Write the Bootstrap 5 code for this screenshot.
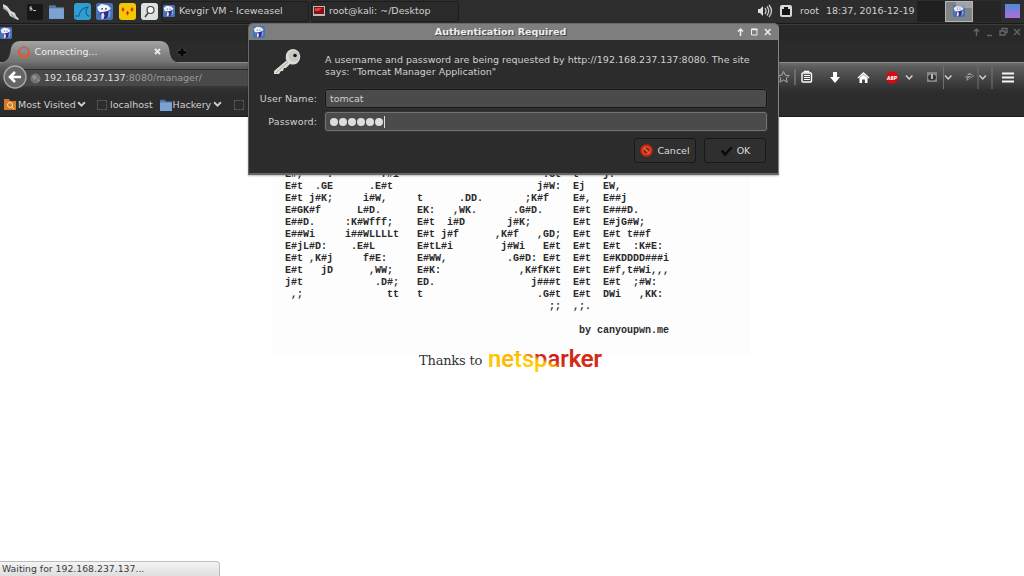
<!DOCTYPE html>
<html lang="en">
<head>
<meta charset="utf-8">
<title>Kevgir VM - Iceweasel</title>
<link href="https://cdn.jsdelivr.net/npm/bootstrap@5.3.0/dist/css/bootstrap.min.css" rel="stylesheet">
<style>
body{font:9.5px/14px "DejaVu Sans",sans-serif;color:#d0d0d0;background:#fff;width:1024px;height:576px;overflow:hidden}
svg{display:block;flex:none}
span{white-space:nowrap}
.panel{height:24px;background:#2d2d2d;border-bottom:1px solid #1a1a1a}
.launch{padding-left:2px;width:161px}
.launch svg{margin-right:5.5px}
.task{height:21px;margin-top:-1px;width:148px;border:1px solid #1d1d1d;border-radius:3px;background:#2a2a2a;padding-left:1px}
.titlebar{height:17px;background:#282828;border-top:1px solid #3b3b3b}
.tabs{height:21px;background:#2b2b2b}
.toolbar{height:31px;background:linear-gradient(#6c6c6c,#5a5a5a 15%,#303030 90%,#2d2d2d);border-top:1px solid #8b8b8b}
.urlbox{height:17px;width:260px;margin-left:-5px;margin-top:-1px;background:#494949;border-top:1px solid #292929;padding-left:11px;color:#9b9b9b}
.urlbox b{font-weight:400;color:#dedede}
.bookmarks{height:24px;background:#2c2c2c;border-bottom:1px solid #1b1b1b;padding-left:4px}
.dash{width:10px;height:10px;flex:none;border:1px dashed #555}
.dlg{left:248px;top:23px;width:531px;height:152px;background:#2c2c2c;border:1px solid #696969;border-right:1px solid #858585;border-bottom:2px solid #666;border-radius:5px 5px 0 0;box-shadow:0 1px 2px #0004}
.dlghead{height:16px;background:#7c7e80;border-radius:4px 4px 0 0;color:#eee;font-weight:700;text-shadow:1px 1px 0 #444}
.field{height:19px;width:442px;background:#4b4b4b;border:1px solid #171717;border-radius:2px;padding-left:4px;outline:1px solid #333}
.field.on{border:1px solid #727272}
.flabel{width:68px;text-align:right;margin-right:8px;letter-spacing:.13px;white-space:nowrap}
.dbtn{height:25px;width:62px;border:1px solid #181818;border-radius:3px;background:#2f2f2f;color:#ddd;gap:4px}
.ascii{font:bold 10px/12px "Liberation Mono",monospace;color:#2a2a2a;margin:0;padding:52px 0 0 285px;height:238px;width:750px;overflow:visible;background:linear-gradient(90deg,transparent 272px,#fdfdfd 272px)}
.thanks{font:13px/20px "DejaVu Serif",serif;color:#333;letter-spacing:-.2px}
.status{left:0;bottom:0;height:15px;width:220px;background:linear-gradient(#f4f4f4,#dedede);border:1px solid #bcbcbc;border-left:0;border-bottom:0;border-radius:0 4px 0 0;color:#3b3b3b;font-size:9.3px;padding-left:2px}
.space{width:28px;height:21px;background:#202020}
</style>
</head>
<body class="position-relative d-flex flex-column">
<svg width="0" height="0" class="position-absolute"><defs>
<symbol id="weasel" viewBox="0 0 16 16"><rect width="16" height="16" rx="2" fill="#4673b6"/><path d="M1 4l4-3 6 1 3 3-2 2-3 2-5 0-2-2z" fill="#f1f3fa"/><path d="M4 9l5-1 3-1 1 4-4 4H5z" fill="#38288b"/><path d="M5 10l2-1 1 3-1 3H5z" fill="#dde2f5"/><path d="M12 7l2 2-1 4-2 1z" fill="#79a7df"/><path d="M5 5.500h1.500M8.500 5.500H10" stroke="#223" stroke-width="1"/></symbol>
<symbol id="folder" viewBox="0 0 16 14"><path d="M1 1h6l1 2h7v11H1z" fill="#56779f"/><path d="M1 4h14v10H1z" fill="#7ba2d2"/></symbol>
<symbol id="chev" viewBox="0 0 8 6"><path d="M1 1l3 3 3-3" fill="none" stroke="currentColor" stroke-width="1.6"/></symbol>
</defs></svg>

<header class="panel d-flex align-items-center flex-shrink-0">
 <div class="launch d-flex align-items-center flex-shrink-0">
  <svg width="18" height="18" viewBox="0 0 18 18"><path d="M1 1l4 2 4 5 4 2 1 3 3 3-1 1-4-2-4-2-2-4-3-3-2-2z" fill="#d4d8da"/><path d="M1 5l5 3M9 11l4 4" stroke="#9aa2a7" stroke-width="1.300"/></svg>
  <svg width="16" height="16" viewBox="0 0 16 16" style="margin-left:1px"><rect width="16" height="16" rx="2" fill="#171717"/><path d="M5 3H3v1.500h2V6H2.500M6 6.500h3" stroke="#ddd" fill="none" stroke-width=".9"/></svg>
  <svg width="17" height="15"><use href="#folder"/></svg>
  <svg width="17" height="17" viewBox="0 0 17 17" style="margin-left:3px"><rect width="17" height="17" rx="3" fill="#319ed1"/><path d="M1 13h4q1-8 9-9-4 5 0 9h2" fill="none" stroke="#135d8c" stroke-width="1.100"/></svg>
  <svg width="17" height="17"><use href="#weasel"/></svg>
  <svg width="17" height="17" viewBox="0 0 17 17"><rect width="17" height="17" rx="3" fill="#f3c800"/><path d="M4 4l1.500 2.500L4 9 2.500 6.500zM8.500 7.500l1.500 2.500-1.500 2.500L7 10zM13 4l1.500 2.500L13 9l-1.500-2.500z" fill="#d22b15"/></svg>
  <svg width="17" height="17" viewBox="0 0 17 17"><rect width="17" height="17" rx="3" fill="#dce2dd"/><circle cx="9.500" cy="7" r="3.500" fill="#f6f6f6" stroke="#3e4342" stroke-width="1.200"/><path d="M7 10l-3 4" stroke="#3e4342" stroke-width="1.500"/></svg>
 </div>
 <div class="task d-flex align-items-center"><svg width="12" height="12"><use href="#weasel"/></svg><span class="ms-1">Kevgir VM - Iceweasel</span></div>
 <div class="task d-flex align-items-center" style="margin-left:2px"><svg width="12" height="10" viewBox="0 0 12 10"><rect width="12" height="10" fill="#bbb"/><rect x="1" y="1" width="10" height="7" fill="#8e0d10"/><path d="M2 2h7L6 5H2z" fill="#dc4141"/></svg><span class="ms-1">root@kali: ~/Desktop</span></div>
 <div class="ms-auto d-flex align-items-center" style="margin-top:-1px">
  <svg width="16" height="14" viewBox="0 0 16 14"><path d="M1 5h2l3-3v10L3 9H1z" fill="#ddd"/><path d="M8 4q2 3 0 6M10 2.500q3.500 4.500 0 9M12 1q5 6 0 12" fill="none" stroke="#ccc" stroke-width="1.300"/></svg>
  <svg width="12" height="12" viewBox="0 0 12 12" style="margin:0 8px 0 7px"><rect width="12" height="12" rx="2" fill="#d8d8d8"/><path d="M2 4h2V2h4v2h2v6H2z" fill="#151515"/></svg>
  <span style="width:26px">root</span><span style="width:91px">18:37, 2016-12-19</span>
  <div class="space"></div>
  <div class="position-relative d-flex justify-content-center align-items-center" style="width:28px;height:21px;background:#818487;border:1px solid #b5b5b5"><svg width="12" height="12"><use href="#weasel"/></svg><i class="position-absolute top-0 end-0" style="width:16px;height:6px;background:#bcc0c488"></i></div>
  <div class="space" style="background:#252525"></div>
  <div style="width:15px;height:14px;margin:0 4px;background:linear-gradient(#508bd6,#b06dd9)"></div>
 </div>
</header>

<section class="flex-shrink-0">
 <div class="titlebar d-flex align-items-center"><svg width="12" height="12"><use href="#weasel"/></svg>
  <svg class="ms-auto" style="margin-right:3px;margin-top:-2px" width="49" height="12" viewBox="0 0 49 12" fill="none" stroke="#656565" stroke-width="1.400"><path d="M4.500 10V3M2 5.500L4.500 3 7 5.500M15 9.500h5M28 5h5v4h-5zM30 5V2.500h5v4h-2M42 3l6 6M48 3l-6 6"/></svg></div>
 <div class="tabs d-flex">
  <svg width="190" height="22" viewBox="0 0 190 22"><defs><linearGradient id="tg" x2="0" y2="1"><stop stop-color="#a3a3a3"/><stop offset="1" stop-color="#707070"/></linearGradient></defs>
   <path d="M0 22q8-1 10-9l1-6Q13 0 20 0h140q7 0 9 7l1 6q2 8 9 9z" fill="url(#tg)"/><circle cx="24" cy="11" r="4.800" fill="none" stroke="#b5695a" stroke-width="2"/><path d="M19 9q-1 6 5 7 5 0 5-5" fill="none" stroke="#ed542a" stroke-width="2"/>
   <text x="34.500" y="14" font-size="9.500" fill="#ededed">Connecting...</text><path d="M155 8l5 5M160 8l-5 5" stroke="#e9e9e9" stroke-width="2"/><path d="M182 7v9M177.500 11.500h9" stroke="#444" stroke-width="4.500"/><path d="M182 7.500v8M178 11.500h8" stroke="#070707" stroke-width="3"/></svg>
 </div>
 <div class="toolbar d-flex align-items-center">
  <svg class="position-relative" style="z-index:1;margin-left:3px;margin-top:-2px" width="24" height="24" viewBox="0 0 24 24"><circle cx="12" cy="12" r="11" fill="#666" stroke="#aaa" stroke-width="1.300"/><path d="M18 12H7M12 7l-5 5 5 5" fill="none" stroke="#fff" stroke-width="2.600"/></svg>
  <div class="urlbox d-flex align-items-center"><svg width="11" height="11" viewBox="0 0 11 11" style="margin-right:3px;margin-left:-3px"><circle cx="5.500" cy="5.500" r="5" fill="#737373"/><path d="M2 3l3-1 2 3-3 2zM7 6l3 1-2 2z" fill="#929292"/></svg><span><b>192.168.237.137</b>:8080/manager/</span></div>
  <svg class="ms-auto" style="margin-top:-2px" width="252" height="26" viewBox="772 64 252 26"><path d="M783.500 71.500l1.700 3.700 4 .3-3 2.700 1 4-3.700-2.200-3.700 2.200 1-4-3-2.700 4-.3z" fill="none" stroke="#aaa"/><path d="M795 69v16" stroke="#777" stroke-width="1.500"/>
   <rect x="802" y="73" width="9.500" height="9" rx="1" fill="none" stroke="#fff" stroke-width="1.400"/><path d="M804.500 72.500v-1h4v1" stroke="#fff" stroke-width="1.500" fill="none"/><path d="M804 75.500h6M804 77.500h6M804 79.500h6" stroke="#fff"/>
   <path d="M833 72h4v5h3l-5 6-5-6h3z" fill="#fff"/><path d="M863.500 72l6 5.500-1 1L863.500 74l-5 4.500-1-1z" fill="#fff"/><path d="M859.500 78l4-3.500 4 3.500v5h-2.600v-3.500h-2.800V83h-2.600z" fill="#fff"/>
   <path d="M889.500 71.500h5l3.500 3.500v5l-3.500 3.500h-5L886 80v-5z" fill="#d20c10"/><text x="892" y="79.600" text-anchor="middle" font-size="5.400" font-weight="bold" font-style="italic" textLength="10" lengthAdjust="spacingAndGlyphs" fill="#fff">ABP</text>
   <g fill="none" stroke="#d0d0d0" stroke-width="1.500"><path d="M906 75.500l3.200 3.500 3.200-3.500M945 75.500l3.200 3.500 3.200-3.500M979.500 75.500l3.200 3.500 3.200-3.500"/></g>
   <rect x="927" y="72" width="10" height="10" fill="#858585"/><ellipse cx="932" cy="77.500" rx="4" ry="3" fill="#333"/><path d="M931 74h2v5h-2z" fill="#bbb"/><path d="M943.500 66v23M978 66v23" stroke="#707070"/><path d="M992 66v23" stroke="#6d7887"/>
   <path d="M965 77l4-4 3 1 2 2-3 2-5 3 1-3z" fill="#999"/><path d="M966 76l7-1M968 79l4-3" stroke="#444"/><path d="M1002 73.500h12M1002 77.500h12M1002 81.500h12" stroke="#f5f5f5" stroke-width="2.200"/></svg>
 </div>
 <div class="bookmarks d-flex align-items-center">
  <svg width="12" height="11" viewBox="0 0 12 11"><path d="M0 0h5l1 2h6v9H0z" fill="#d77a28"/><circle cx="6" cy="6" r="2.500" fill="none" stroke="#ffe0b8"/><path d="M8 8l2 2" stroke="#ffe0b8"/></svg>
  <span style="width:59px;margin-left:2px">Most Visited</span><svg width="9" height="7"><use href="#chev"/></svg>
  <i class="dash" style="margin-left:11px"></i><span style="width:49px;margin-left:3px">localhost</span>
  <svg width="14" height="12" class="ms-0"><use href="#folder"/></svg><span style="width:40px;margin-left:-.5px">Hackery</span><svg width="9" height="7"><use href="#chev"/></svg>
  <i class="dash" style="margin-left:12px"></i>
 </div>
</section>

<main class="flex-grow-1">
 <pre class="ascii" id="art"></pre>
 <div class="d-flex thanks" style="padding-left:419px;margin-top:-4px"><span style="width:70px">Thanks to</span>
 <svg width="118" height="30" viewBox="0 0 118 30" style="margin-top:-7px;letter-spacing:0"><defs><linearGradient id="ng" gradientUnits="userSpaceOnUse" x1="62" y1="4" x2="53" y2="27"><stop offset=".2" stop-color="#c80f18"/><stop offset=".48" stop-color="#d62a15"/><stop offset=".66" stop-color="#fb0"/><stop offset="1" stop-color="#ffd000"/></linearGradient><linearGradient id="nl"><stop stop-color="#fc0"/><stop offset=".12" stop-color="#fb1"/><stop offset=".26" stop-color="#f80" stop-opacity="0"/></linearGradient><linearGradient id="nr" gradientUnits="userSpaceOnUse" x1="60" x2="90" y1="0" y2="0"><stop stop-color="#e34a12" stop-opacity="0"/><stop offset="1" stop-color="#d93412" stop-opacity=".8"/></linearGradient></defs>
 <g font-family="Roboto" font-size="24.500" font-weight="500"><text x="-1" y="22.500" textLength="114" lengthAdjust="spacingAndGlyphs" fill="url(#ng)">netsparker</text><text x="-1" y="22.500" textLength="114" lengthAdjust="spacingAndGlyphs" fill="url(#nl)" aria-hidden="true">netsparker</text><text x="-1" y="22.500" textLength="114" lengthAdjust="spacingAndGlyphs" fill="url(#nr)" aria-hidden="true">netsparker</text></g></svg></div>
</main>

<div class="dlg position-absolute">
 <div class="dlghead d-flex align-items-center"><svg class="ms-1" width="12" height="12"><use href="#weasel"/></svg><span class="mx-auto">Authentication Required</span>
  <svg width="38" height="10" viewBox="0 0 38 10" style="margin-right:4px" fill="none" stroke="#eee" stroke-width="1.500"><path d="M4.500 9V2M2 4.500L4.500 2 7 4.500"/><path d="M15.500 2h5.500v6h-5.500z" stroke-width="1"/><path d="M15 2.500h6.500M29 2l5.500 6M34.500 2L29 8"/></svg></div>
 <div class="d-flex" style="height:49px">
  <svg width="30" height="28" viewBox="0 0 30 28" style="margin:8px 22px 0 24px"><path d="M14 12L1 23v3l5 0 2-3 2 0 1-3h2l4-4q6 2 9-3 3-6-1-10-5-4-10 0-3 3-2 9z" fill="#dbdcd4"/><path d="M15 14L3 25" stroke="#a5a59e"/><circle cx="21" cy="8" r="5.500" fill="#c6c7c0"/><circle cx="22" cy="7.500" r="1.800" fill="#161616"/></svg>
  <div class="text-nowrap" style="line-height:12px;padding-top:14px">A username and password are being requested by http://192.168.237.137:8080. The site<br>says: "Tomcat Manager Application"</div>
 </div>
 <div class="d-flex align-items-center"><label class="flabel">User Name:</label><div class="field d-flex align-items-center">tomcat</div></div>
 <div class="d-flex align-items-center" style="margin-top:4px"><label class="flabel">Password:</label><div class="field on d-flex align-items-center"><svg width="56" height="13" viewBox="1 0 56 13" fill="#ddd"><circle cx="5" cy="7" r="4"/><circle cx="14" cy="7" r="4"/><circle cx="23" cy="7" r="4"/><circle cx="32" cy="7" r="4"/><circle cx="41" cy="7" r="4"/><circle cx="50" cy="7" r="4"/><path d="M55.500 1v12" stroke="#ddd"/></svg></div></div>
 <div class="d-flex justify-content-end" style="gap:8px;margin:7px 12px 0">
  <div class="dbtn d-flex align-items-center justify-content-center"><svg width="13" height="13" viewBox="0 0 13 13"><circle cx="6.500" cy="6.500" r="6.300" fill="#c8240d"/><circle cx="6.500" cy="6.500" r="3.700" fill="#68251a" stroke="#ed5937" stroke-width="1.300"/><path d="M3.500 3.500l6 6" stroke="#ed5937" stroke-width="2"/></svg>Cancel</div>
  <div class="dbtn d-flex align-items-center justify-content-center"><svg width="13" height="12" viewBox="0 0 13 12"><path d="M0 6l3-2 2 3 6-6 2 2-8 9z" fill="#0c0c0c" stroke="#494949" stroke-width=".4"/></svg>OK</div>
 </div>
</div>
<div class="status position-absolute d-flex align-items-center">Waiting for 192.168.237.137...</div>

<script>
// Each row of the banner lists its pieces as column, text.
const rows=[
[0,'E#,',7,':',16,'f#i',43,'.Gt',48,'t',53,'j.'],
[0,'E#t',5,'.GE',14,'.E#t',42,'j#W:',48,'Ej',53,'EW,'],
[0,'E#t j#K;',13,'i#W,',22,'t',29,'.DD.',40,';K#f',48,'E#,',53,'E##j'],
[0,'E#GK#f',12,'L#D.',22,'EK:',28,',WK.',38,'.G#D.',48,'E#t',53,'E###D.'],
[0,'E##D.',10,':K#Wfff;',22,'E#t  i#D',37,'j#K;',48,'E#t',53,'E#jG#W;'],
[0,'E##Wi',10,'i##WLLLLt',22,'E#t j#f',35,',K#f',42,',GD;',48,'E#t',53,'E#t t##f'],
[0,'E#jL#D:',11,'.E#L',22,'E#tL#i',36,'j#Wi',43,'E#t',48,'E#t',53,'E#t  :K#E:'],
[0,'E#t ,K#j',13,'f#E:',22,'E#WW,',37,'.G#D:',43,'E#t',48,'E#t',53,'E#KDDDD###i'],
[0,'E#t',6,'jD',14,',WW;',22,'E#K:',39,',K#fK#t',48,'E#t',53,'E#f,t#Wi,,,'],
[0,'j#t',15,'.D#;',22,'ED.',41,'j###t',48,'E#t',53,'E#t  ;#W:'],
[1,',;',17,'tt',22,'t',42,'.G#t',48,'E#t',53,'DWi',59,',KK:'],
[44,';;',48,',;.'],[],[49,'by canyoupwn.me']];
document.getElementById('art').textContent=rows.map(r=>{let s='';for(let i=0;i<r.length;i+=2)s=s.padEnd(r[i])+r[i+1];return s}).join('\n');
</script>
<script src="https://cdn.jsdelivr.net/npm/bootstrap@5.3.0/dist/js/bootstrap.bundle.min.js"></script>
</body>
</html>
